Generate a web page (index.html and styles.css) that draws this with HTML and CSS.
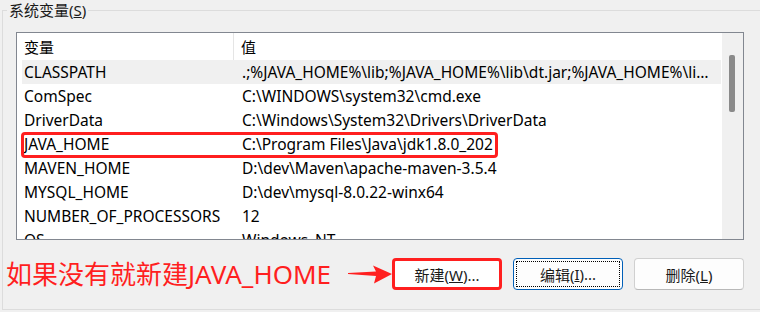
FILE: index.html
```html
<!DOCTYPE html>
<html lang="zh-CN">
    <head>
        <meta charset="utf-8">
        <title>系统变量</title>
        <link rel="stylesheet" href="styles.css">
    </head>
    <body>
        <fieldset class="group">
            <legend>系统变量(<u>S</u>)</legend>

            <div class="list">
                <div class="list-body">
                    <div class="list-head">
                        <span class="col-name">变量</span>
                        <span class="col-value head-value">值</span>
                    </div>
                    <div class="row active"><span class="col-name">CLASSPATH</span><span class="col-value">.;%JAVA_HOME%\lib;%JAVA_HOME%\lib\dt.jar;%JAVA_HOME%\lib\tools.jar</span></div>
                    <div class="row"><span class="col-name">ComSpec</span><span class="col-value">C:\WINDOWS\system32\cmd.exe</span></div>
                    <div class="row"><span class="col-name">DriverData</span><span class="col-value">C:\Windows\System32\Drivers\DriverData</span></div>
                    <div class="row"><span class="col-name">JAVA_HOME</span><span class="col-value">C:\Program Files\Java\jdk1.8.0_202</span></div>
                    <div class="row"><span class="col-name">MAVEN_HOME</span><span class="col-value">D:\dev\Maven\apache-maven-3.5.4</span></div>
                    <div class="row"><span class="col-name">MYSQL_HOME</span><span class="col-value">D:\dev\mysql-8.0.22-winx64</span></div>
                    <div class="row"><span class="col-name">NUMBER_OF_PROCESSORS</span><span class="col-value">12</span></div>
                    <div class="row"><span class="col-name">OS</span><span class="col-value">Windows_NT</span></div>

                    <div class="mark"></div>
                </div>
                <div class="scrollbar"><div class="thumb"></div></div>
            </div>

            <div class="actions">
                <span class="note">如果没有就新建JAVA_HOME</span>
                <svg class="arrow" width="44" height="24" viewBox="0 0 44 24">
                    <polygon points="0,11 28,9.5 25,3.5 44,12 26,21.5 28,14 0,12" fill="#ff1f1f"/>
                </svg>
                <div class="buttons">
                    <button class="btn btn-marked">新建(<u>W</u>)...</button>
                    <button class="btn btn-focus"><span class="focus-ring">编辑(<u>I</u>)...</span></button>
                    <button class="btn">删除(<u>L</u>)</button>
                </div>
            </div>
        </fieldset>
    </body>
</html>
```

FILE: styles.css
```css
body {
    margin: 0;
    background: #f0f0f0;
    font-family: "Noto Sans", "Noto Sans CJK SC", sans-serif;
    font-size: 15.5px;
    color: #000;
    overflow: hidden;
}

.group {
    width: 728px;
    min-width: 0;
    margin: 0 0 0 2px;
    padding: 0 30px 19px 13px;
    border: 1px solid #dcdcdc;
}

.group legend {
    margin-left: -9px;
    padding: 0 2px;
    font-size: 15px;
    line-height: 20px;
    color: #1a1a1a;
}

.list {
    display: flex;
    box-sizing: border-box;
    width: 728px;
    height: 208px;
    margin-top: 12px;
    border: 1px solid #828790;
    background: #fff;
    overflow: hidden;
}

.list-body {
    position: relative;
    flex: 1;
    min-width: 0;
    padding-left: 5px;
    overflow: hidden;
}

.list-head {
    display: flex;
    height: 27px;
    align-items: center;
    font-size: 15px;
}

.list-head .col-name {
    align-self: stretch;
    display: flex;
    align-items: center;
    border-right: 1px solid #e5e5e5;
}

.row {
    display: flex;
    height: 24px;
    align-items: center;
    white-space: nowrap;
}

.row.active {
    background: #f0f0f0;
}

.col-name {
    box-sizing: border-box;
    width: 212px;
    flex: none;
    padding-left: 2px;
}

.col-value {
    flex: 1;
    min-width: 0;
    padding: 0 9px 0 8px;
    overflow: hidden;
    text-overflow: ellipsis;
}

.head-value {
    padding-left: 7px;
}

.mark {
    position: absolute;
    left: 4px;
    top: 99px;
    box-sizing: border-box;
    width: 477px;
    height: 26px;
    border: 3px solid #ff1f1f;
    border-radius: 4px;
}

.scrollbar {
    width: 21px;
    flex: none;
    background: #f0f0f0;
    border-left: 1px solid #fff;
}

.thumb {
    width: 6px;
    height: 57px;
    margin: 22px 0 0 7px;
    background: #8a8a8a;
    border-radius: 2px;
}

.actions {
    display: flex;
    align-items: center;
    width: 728px;
    height: 32px;
    margin-top: 18px;
}

.note {
    margin-left: -10px;
    font-size: 26px;
    line-height: 32px;
    color: #ff1f1f;
    white-space: nowrap;
}

.arrow {
    margin-left: auto;
    flex: none;
}

.buttons {
    display: flex;
    gap: 11px;
}

.btn {
    box-sizing: border-box;
    width: 110px;
    height: 32px;
    padding: 0;
    background: #fdfdfd;
    border: 1px solid #d0d0d0;
    border-bottom-color: #b8b8b8;
    border-radius: 4px;
    font-family: "Noto Sans", "Noto Sans CJK SC", sans-serif;
    font-size: 15px;
    color: #1a1a1a;
}

.btn-marked {
    border: 3px solid #ff1f1f;
    border-radius: 4px;
    background: #fff;
}

.btn-focus {
    border-color: #005fb8;
    padding: 2px;
}

.focus-ring {
    display: flex;
    align-items: center;
    justify-content: center;
    height: 100%;
    border: 1px dotted #000;
    box-sizing: border-box;
}
```
